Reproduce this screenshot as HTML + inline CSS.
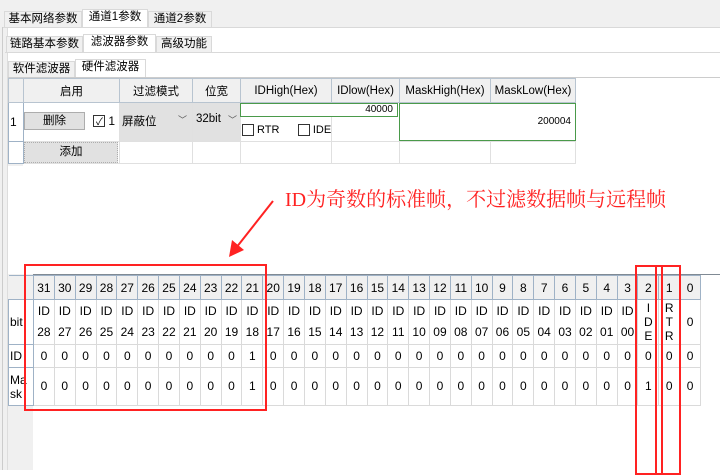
<!DOCTYPE html>
<html><head><meta charset="utf-8"><style>
*{margin:0;padding:0;box-sizing:border-box}
body{width:720px;height:470px;overflow:hidden;background:#fff;position:relative;font-family:"Liberation Sans","Noto Sans CJK SC",sans-serif;font-size:12px;color:#000}
.a{position:absolute}
.tab{position:absolute;height:17px;border:1px solid #d9d9d9;background:#f0f0f0;text-align:center;line-height:15px;font-size:11.5px}
.tab.sel{background:#fff;border-bottom:none;height:19px}
table{border-collapse:collapse;table-layout:fixed;position:absolute}
td,th{overflow:hidden;white-space:nowrap;text-align:center;font-weight:normal}
.tt th{background:#f0f0f0;border:1px solid #b8c4d0;height:24px;font-size:11.5px}
.tt td{border:1px solid #e0e0e0}
.bt th{background:#f0f0f0;border:1px solid #9fb2c6;height:24px;font-size:12px}
.bt td{border:1px solid #dadada;font-size:12px;line-height:21px;white-space:normal}
.bt td.rh,.tt td.rh{background:#fff;border:1px solid #9fb2c6;text-align:left;padding-left:1px}
.btn{position:absolute;background:#e1e1e1;border:1px solid #adadad;text-align:center;font-size:11.5px}
.cb{display:inline-block;width:12px;height:12px;border:1px solid #333;vertical-align:middle;background:#fff}
.red{position:absolute;border:2px solid #f22}
</style></head><body>
<div class="a" style="left:0;top:0;width:720px;height:27px;background:#f0f0f0"></div>
<div class="a" style="left:0;top:27px;width:8px;height:443px;background:#f0f0f0;border-right:1px solid #ddd"></div>
<div class="a" style="left:2px;top:27px;width:1px;height:443px;background:#ccc"></div>
<div class="tab" style="left:4px;top:11px;width:78px">基本网络参数</div>
<div class="tab sel" style="left:82px;top:9px;width:66px">通道1参数</div>
<div class="tab" style="left:148px;top:11px;width:64px">通道2参数</div>
<div class="a" style="left:3px;top:27px;width:717px;height:1px;background:#d9d9d9"></div>
<div class="tab" style="left:6px;top:36px;width:77px">链路基本参数</div>
<div class="tab sel" style="left:83px;top:34px;width:73px">滤波器参数</div>
<div class="tab" style="left:156px;top:36px;width:56px">高级功能</div>
<div class="a" style="left:5px;top:52px;width:715px;height:1px;background:#d9d9d9"></div>
<div class="tab" style="left:8px;top:61px;width:67px">软件滤波器</div>
<div class="tab sel" style="left:75px;top:59px;width:71px">硬件滤波器</div>
<div class="a" style="left:8px;top:77px;width:712px;height:1px;background:#ccc"></div>
<div class="a" style="left:8px;top:78px;width:15px;height:88px;background:#f0f0f0"></div>
<table class="tt" style="left:8px;top:78px;width:567px">
<colgroup><col style="width:15px"><col style="width:96px"><col style="width:73px"><col style="width:48px"><col style="width:91px"><col style="width:68px"><col style="width:91px"><col style="width:85px"></colgroup>
<tr><th style="background:#f0f0f0"></th><th>启用</th><th>过滤模式</th><th>位宽</th><th>IDHigh(Hex)</th><th>IDlow(Hex)</th><th>MaskHigh(Hex)</th><th>MaskLow(Hex)</th></tr>
<tr style="height:39px"><td class="rh">1</td><td></td><td style="background:#e1e1e1"></td><td style="background:#e1e1e1"></td><td></td><td></td><td></td><td></td></tr>
<tr style="height:22px"><td class="rh"></td><td></td><td></td><td></td><td></td><td></td><td></td><td></td></tr>
</table>
<div class="btn" style="left:24px;top:112px;width:61px;height:18px;line-height:16px">删除</div>
<div class="a" style="left:93px;top:114px;font-size:12px"><span class="cb" style="position:relative;top:-1px"></span> 1</div>
<div class="a" style="left:96px;top:113px;font-size:10px">✓</div>
<div class="a" style="left:122px;top:113px;font-size:11.5px">屏蔽位</div>
<div class="a" style="left:178px;top:113px;font-size:9px;color:#555">﹀</div>
<div class="a" style="left:196px;top:113px;font-size:11.5px">32bit</div>
<div class="a" style="left:228px;top:113px;font-size:9px;color:#555">﹀</div>
<div class="a" style="left:240px;top:103px;width:158px;height:14px;border:1px solid #4a9a4a;background:#fff;text-align:right;font-size:10px;line-height:12px;padding-right:4px">40000</div>
<div class="a" style="left:242px;top:124px;font-size:11px"><span class="cb"></span> RTR &nbsp;&nbsp;&nbsp;&nbsp;&nbsp;<span class="cb"></span> IDE</div>
<div class="a" style="left:399px;top:103px;width:177px;height:38px;border:1px solid #4a9a4a;background:#fff;text-align:right;font-size:10px;line-height:36px;padding-right:4px">200004</div>
<div class="btn" style="left:24px;top:142px;width:94px;height:21px;line-height:19px;border-style:dotted">添加</div>
<div class="a" style="left:8px;top:274px;width:712px;height:1px;background:#808a94"></div>
<div class="a" style="left:8px;top:274px;width:25px;height:196px;background:#f0f0f0"></div>
<table class="bt" style="left:8px;top:275px;width:693px">
<colgroup><col style="width:25px"></colgroup>
<tr><th style="border-left:none"></th><th>31</th><th>30</th><th>29</th><th>28</th><th>27</th><th>26</th><th>25</th><th>24</th><th>23</th><th>22</th><th>21</th><th>20</th><th>19</th><th>18</th><th>17</th><th>16</th><th>15</th><th>14</th><th>13</th><th>12</th><th>11</th><th>10</th><th>9</th><th>8</th><th>7</th><th>6</th><th>5</th><th>4</th><th>3</th><th>2</th><th>1</th><th>0</th></tr>
<tr style="height:45px"><td class="rh">bit</td><td>ID 28</td><td>ID 27</td><td>ID 26</td><td>ID 25</td><td>ID 24</td><td>ID 23</td><td>ID 22</td><td>ID 21</td><td>ID 20</td><td>ID 19</td><td>ID 18</td><td>ID 17</td><td>ID 16</td><td>ID 15</td><td>ID 14</td><td>ID 13</td><td>ID 12</td><td>ID 11</td><td>ID 10</td><td>ID 09</td><td>ID 08</td><td>ID 07</td><td>ID 06</td><td>ID 05</td><td>ID 04</td><td>ID 03</td><td>ID 02</td><td>ID 01</td><td>ID 00</td><td style="line-height:14px">I<br>D<br>E</td><td style="line-height:14px">R<br>T<br>R</td><td>0</td></tr>
<tr style="height:23px"><td class="rh">ID</td><td>0</td><td>0</td><td>0</td><td>0</td><td>0</td><td>0</td><td>0</td><td>0</td><td>0</td><td>0</td><td>1</td><td>0</td><td>0</td><td>0</td><td>0</td><td>0</td><td>0</td><td>0</td><td>0</td><td>0</td><td>0</td><td>0</td><td>0</td><td>0</td><td>0</td><td>0</td><td>0</td><td>0</td><td>0</td><td>0</td><td>0</td><td>0</td></tr>
<tr style="height:38px"><td class="rh" style="line-height:14px">Ma<br>sk</td><td>0</td><td>0</td><td>0</td><td>0</td><td>0</td><td>0</td><td>0</td><td>0</td><td>0</td><td>0</td><td>1</td><td>0</td><td>0</td><td>0</td><td>0</td><td>0</td><td>0</td><td>0</td><td>0</td><td>0</td><td>0</td><td>0</td><td>0</td><td>0</td><td>0</td><td>0</td><td>0</td><td>0</td><td>0</td><td>1</td><td>0</td><td>0</td></tr>
</table>
<div class="red" style="left:24px;top:264px;width:243px;height:147px"></div>
<div class="red" style="left:635px;top:265px;width:28px;height:210px"></div>
<div class="red" style="left:655px;top:265px;width:26px;height:210px"></div>
<div class="a" style="left:285px;top:188px;font-family:'Liberation Serif','Noto Serif CJK SC',serif;font-size:20px;color:#f22;white-space:nowrap;line-height:24px">ID为奇数的标准帧，不过滤数据帧与远程帧</div>
<svg class="a" style="left:0;top:0" width="720" height="470"><line x1="273" y1="201" x2="236" y2="248" stroke="#f22" stroke-width="2"/><polygon points="229,257 232,240 244,250" fill="#f22"/></svg>
</body></html>
